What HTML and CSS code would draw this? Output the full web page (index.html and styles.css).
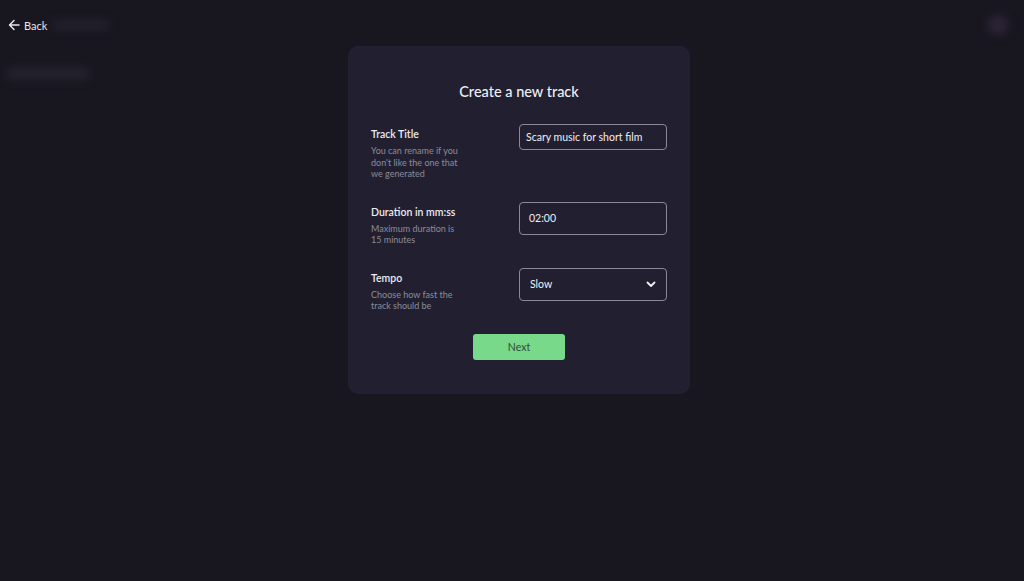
FILE: index.html
```html
<!DOCTYPE html>
<html lang="en">
<head>
  <meta charset="UTF-8" />
  <title>Create a new track</title>
  <link rel="stylesheet" href="styles.css">
</head>
<body>
  <header class="topbar">
    <a class="back" href="#">
      <svg width="12" height="12" viewBox="0 0 12 12" fill="none" stroke="currentColor" stroke-width="1.5" stroke-linecap="round" stroke-linejoin="round">
        <path d="M11 6H1.5M6 1.5L1.5 6L6 10.5"/>
      </svg>
      <span>Back</span>
    </a>
    <div class="ghost ghost-title"></div>
    <div class="ghost ghost-avatar"></div>
  </header>
  <div class="ghost ghost-sub"></div>

  <main class="stage">
    <div class="card">
      <h1>Create a new track</h1>

      <div class="row">
        <div class="info">
          <div class="label">Track Title</div>
          <div class="hint">You can rename if you don't like the one that we generated</div>
        </div>
        <div class="field short">Scary music for short film</div>
      </div>

      <div class="row">
        <div class="info">
          <div class="label">Duration in mm:ss</div>
          <div class="hint">Maximum duration is 15 minutes</div>
        </div>
        <div class="field">02:00</div>
      </div>

      <div class="row">
        <div class="info">
          <div class="label">Tempo</div>
          <div class="hint">Choose how fast the track should be</div>
        </div>
        <div class="field select">
          <span>Slow</span>
          <svg width="10" height="7" viewBox="0 0 10 7" fill="none" stroke="currentColor" stroke-width="1.8" stroke-linecap="round" stroke-linejoin="round">
            <path d="M1.5 1.5L5 5L8.5 1.5"/>
          </svg>
        </div>
      </div>

      <div class="actions">
        <button class="btn">Next</button>
      </div>
    </div>
  </main>
</body>
</html>
```

FILE: styles.css
```css
body {
  margin: 0;
  font-family: Lato, 'Open Sans', sans-serif;
  background: #18161f;
  color: #ecebf1;
  min-height: 581px;
  position: relative;
}

.topbar {
  height: 50px;
  display: flex;
  align-items: center;
  padding: 0 8px;
  position: relative;
}

.back {
  display: flex;
  align-items: center;
  gap: 4px;
  color: #e8e7ee;
  text-decoration: none;
  font-size: 11px;
}

.ghost {
  position: absolute;
  background: #26242f;
  filter: blur(5px);
  border-radius: 6px;
}

.ghost-title {
  left: 52px;
  top: 21px;
  width: 58px;
  height: 8px;
}

.ghost-avatar {
  right: 16px;
  top: 15px;
  width: 20px;
  height: 20px;
  border-radius: 50%;
  background: #2d2538;
}

.ghost-sub {
  left: 6px;
  top: 68px;
  width: 84px;
  height: 11px;
}

.stage {
  display: flex;
  justify-content: center;
  margin-top: -4px;
  padding-left: 14px;
  position: relative;
}

.card {
  width: 342px;
  box-sizing: border-box;
  background: #222030;
  border-radius: 10px;
  padding: 37px 23px 34px;
}

h1 {
  margin: 0 0 24px;
  text-align: center;
  font-size: 14.5px;
  line-height: 17px;
  font-weight: 500;
  color: #f0eff4;
}

.row {
  display: flex;
  justify-content: space-between;
  align-items: flex-start;
  margin-bottom: 22px;
}

.info {
  width: 92px;
  padding-top: 4px;
}

.label {
  font-size: 10.5px;
  line-height: 13px;
  font-weight: 600;
  color: #ecebf1;
  margin-bottom: 4px;
}

.hint {
  font-size: 9px;
  line-height: 11.5px;
  color: #8d8b99;
}

.field {
  width: 148px;
  height: 33px;
  box-sizing: border-box;
  border: 1px solid #8a8899;
  border-radius: 4px;
  padding: 0 9px;
  display: flex;
  align-items: center;
  font-size: 10.5px;
  color: #f0eff4;
}

.field.short {
  height: 26px;
  padding: 0 6px;
}

.select {
  justify-content: space-between;
  padding: 0 10px;
}

.actions {
  display: flex;
  justify-content: center;
}

.btn {
  width: 92px;
  height: 26px;
  background: #78d98a;
  color: #2f4a35;
  border: none;
  border-radius: 3px;
  font-family: inherit;
  font-size: 10.5px;
  cursor: pointer;
}
```
